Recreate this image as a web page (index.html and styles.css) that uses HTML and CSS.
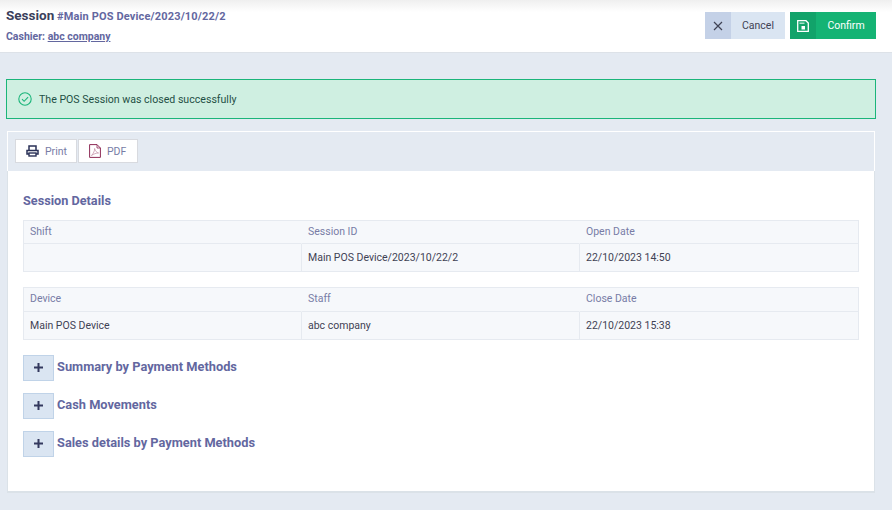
FILE: index.html
```html
<!DOCTYPE html>
<html lang="en">
<head>
<meta charset="utf-8">
<title>Session</title>
<link rel="stylesheet" href="styles.css">
</head>
<body>
<header class="topbar">
  <div class="heading">
    <div class="title"><span class="title-main">Session</span> <span class="title-ref">#Main POS Device/2023/10/22/2</span></div>
    <div class="cashier">Cashier: <a href="#" class="cashier-link">abc company</a></div>
  </div>
  <div class="actions">
    <button class="btn btn-cancel"><span class="btn-icon">
      <svg width="12" height="12" viewBox="0 0 12 12"><path d="M2 2l8 8M10 2l-8 8" stroke="#3f4254" stroke-width="1.2" fill="none"/></svg>
    </span><span class="btn-label">Cancel</span></button>
    <button class="btn btn-confirm"><span class="btn-icon">
      <svg width="12" height="12" viewBox="0 0 12 12"><path d="M0.700 0.700h8.300l2.300 2.300v8.300h-10.600z" fill="none" stroke="#fff" stroke-width="1.300"/><path d="M2.500 3.200h5" stroke="#cfefe1" stroke-width="1.200" fill="none"/><rect x="4.500" y="6" width="3.500" height="3.500" fill="#fff"/></svg>
    </span><span class="btn-label">Confirm</span></button>
  </div>
</header>
<main class="content">
  <div class="alert">
    <svg class="alert-icon" width="14" height="14" viewBox="0 0 14 14"><circle cx="7" cy="7" r="6.200" fill="none" stroke="#1bb57a" stroke-width="1.100"/><path d="M4 7.200l2.100 2.100 4-4.200" fill="none" stroke="#1bb57a" stroke-width="1.100"/></svg>
    <span>The POS Session was closed successfully</span>
  </div>
  <section class="card">
    <div class="toolbar">
      <button class="tool"><svg width="13" height="12" viewBox="0 0 13 12"><path d="M3 5V1h7v4M3 9H1V5.500h11V9h-2" fill="none" stroke="#2a3157" stroke-width="1.500"/><rect x="3" y="8" width="7" height="3" fill="none" stroke="#2a3157" stroke-width="1.400"/></svg><span>Print</span></button>
      <button class="tool tool-pdf"><svg width="12" height="14" viewBox="0 0 12 14"><path d="M0.600 0.600h7.400l3.400 3.400v9.400H0.600z" fill="none" stroke="#8e2b56" stroke-width="1"/><path d="M8 .6v3.400h3.400" fill="none" stroke="#8e2b56" stroke-width=".8"/><path d="M2.500 11.500C4.500 9.500 5.800 6.500 5.600 4.500c.6 2.500 2 4 4 4.500-2.500 0-5 1-7.100 2.500z" fill="none" stroke="#c08aa2" stroke-width=".7"/></svg><span>PDF</span></button>
    </div>
    <div class="card-body">
      <h2 class="section-title">Session Details</h2>
      <div class="info-table">
        <div class="cell head">Shift</div><div class="cell head">Session ID</div><div class="cell head">Open Date</div>
        <div class="cell val"></div><div class="cell val">Main POS Device/2023/10/22/2</div><div class="cell val">22/10/2023 14:50</div>
      </div>
      <div class="info-table info-table-second">
        <div class="cell head">Device</div><div class="cell head">Staff</div><div class="cell head">Close Date</div>
        <div class="cell val">Main POS Device</div><div class="cell val">abc company</div><div class="cell val">22/10/2023 15:38</div>
      </div>
      <div class="expander"><button class="plus"><svg width="9" height="9" viewBox="0 0 9 9"><path d="M4.500 0v9M0 4.500h9" stroke="#33395e" stroke-width="2" fill="none"/></svg></button><span class="exp-label">Summary by Payment Methods</span></div>
      <div class="expander"><button class="plus"><svg width="9" height="9" viewBox="0 0 9 9"><path d="M4.500 0v9M0 4.500h9" stroke="#33395e" stroke-width="2" fill="none"/></svg></button><span class="exp-label">Cash Movements</span></div>
      <div class="expander"><button class="plus"><svg width="9" height="9" viewBox="0 0 9 9"><path d="M4.500 0v9M0 4.500h9" stroke="#33395e" stroke-width="2" fill="none"/></svg></button><span class="exp-label">Sales details by Payment Methods</span></div>
    </div>
  </section>
</main>
</body>
</html>
```
FILE: styles.css
```css
* { box-sizing: border-box; }
html, body { margin: 0; padding: 0; }
body {
  width: 892px;
  height: 510px;
  overflow: hidden;
  background: #e4eaf2;
  font-family: Roboto, "Liberation Sans", sans-serif;
  font-size: 11px;
  color: #3f4254;
}
.topbar {
  height: 53px;
  background: linear-gradient(#efefef 0, #fff 12px);
  border-bottom: 1px solid #dde2e8;
  display: flex;
  justify-content: space-between;
  padding: 6px 16px 0 6px;
}
.title { line-height: 19px; }
.title-main { font-size: 13.500px; font-weight: 700; color: #3b3f5c; }
.title-ref { font-size: 11px; font-weight: 700; color: #63679f; letter-spacing: .15px; }
.cashier { font-size: 10.500px; font-weight: 700; color: #63679f; margin-top: 3px; line-height: 16px; }
.cashier-link { color: #63679f; }
.actions { display: flex; gap: 5px; padding-top: 6px; }
.btn {
  display: flex;
  height: 27px;
  padding: 0;
  border: 0;
  font: inherit;
  font-size: 10.500px;
  align-items: stretch;
}
.btn-icon { width: 26px; display: flex; align-items: center; justify-content: center; }
.btn-label { display: flex; align-items: center; justify-content: center; flex: 1; }
.btn-cancel { width: 80px; background: #dae5f2; color: #3f4254; }
.btn-cancel .btn-icon { background: #c4d1e7; }
.btn-confirm { width: 86px; background: #15b374; color: #fff; }
.btn-confirm .btn-icon { background: #12a36a; }
.content { padding: 26px 16px 0 6px; }
.alert {
  height: 40px;
  background: #cfefe1;
  border: 1px solid #1bb57a;
  color: #1f4f45;
  font-size: 10.600px;
  display: flex;
  align-items: center;
  gap: 7px;
  padding-left: 11px;
}
.card {
  margin: 12px 0 0 1px;
  width: 868px;
  height: 362px;
  background: #fff;
  display: flex;
  flex-direction: column;
}
.toolbar {
  height: 40px;
  background: #e4eaf2;
  border: 1px solid #fff;
  border-bottom: 0;
  display: flex;
  gap: 1px;
  padding: 7px 0 0 7px;
  align-items: flex-start;
}
.tool {
  height: 24px;
  background: #fff;
  border: 1px solid #d8dadf;
  font: inherit;
  font-size: 10.500px;
  color: #787ca6;
  display: flex;
  align-items: center;
  gap: 6px;
  padding: 0 9px 0 10px;
}
.tool-pdf { padding: 0 11px 0 10px; }
.card-body {
  flex: 1;
  border: 1px solid #dbe2e8;
  border-width: 0 1px 2px;
  padding: 22px 15px 0;
}
.section-title { margin: 0 0 11px; font-size: 12.700px; line-height: 16px; font-weight: 700; color: #63679f; }
.info-table {
  display: grid;
  grid-template-columns: 277px 278px 1fr;
  border: 1px solid #e6eaf0;
  border-width: 1px 1px 0 1px;
  margin-bottom: 15px;
  width: 836px;
  background: #f6f8fb;
}
.cell {
  padding: 0 6px;
  display: flex;
  align-items: center;
  border-bottom: 1px solid #e6eaf0;
  border-left: 1px solid #e6eaf0;
  font-size: 10.500px;
}
.cell:nth-child(3n+1) { border-left: 0; }
.head { height: 23px; padding-bottom: 2px; color: #787ca6; border-left-color: transparent; }
.info-table-second .head { height: 24px; padding-bottom: 3px; }
.val { color: #3f4254; height: 28px; }
.expander { display: flex; align-items: flex-start; margin-bottom: 12px; gap: 3px; }
.plus {
  width: 31px;
  height: 26px;
  padding: 0 0 2px;
  background: #dae5f2;
  border: 1px solid #c0d3e8;
  display: flex;
  align-items: center;
  justify-content: center;
}
.exp-label { font-size: 12.800px; font-weight: 700; color: #63679f; line-height: 20px; padding-top: 2px; }
```
